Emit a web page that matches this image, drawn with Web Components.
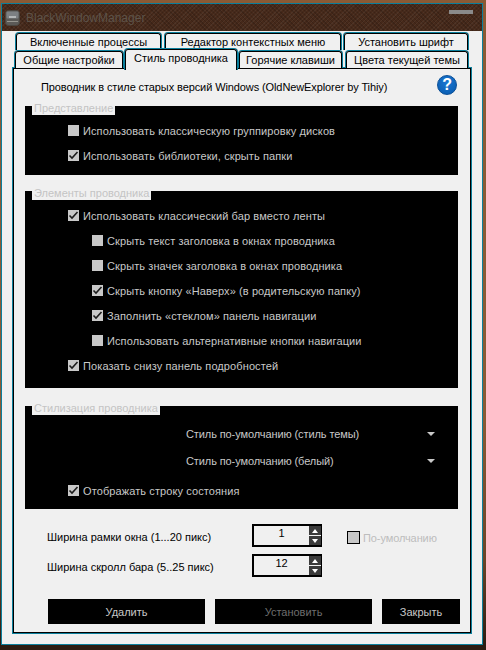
<!DOCTYPE html>
<html>
<head>
<meta charset="utf-8">
<title>BlackWindowManager</title>
<style>
html, body { margin: 0; padding: 0; height: 650px; overflow: hidden; }
body {
    background: linear-gradient(#8a5a34 0, #8a5a34 420px, #6b4428 560px, #2c1c12 645px);
    font: 11px "Liberation Sans", Arial, sans-serif;
}
</style>
</head>
<body>
<bwm-window caption="BlackWindowManager">
    <bwm-tabs>
        <div slot="top">
            <bwm-tab style="width:147px">Включенные процессы</bwm-tab>
            <bwm-tab style="width:178px;margin-left:2px">Редактор контекстных меню</bwm-tab>
            <bwm-tab style="width:126px;margin-left:1px">Установить шрифт</bwm-tab>
        </div>
        <div slot="bottom">
            <bwm-tab style="width:110px">Общие настройки</bwm-tab>
            <bwm-tab active style="width:114px">Стиль проводника</bwm-tab>
            <bwm-tab style="width:105px">Горячие клавиши</bwm-tab>
            <bwm-tab style="width:124px;margin-left:2px">Цвета текущей темы</bwm-tab>
        </div>
    </bwm-tabs>
    <bwm-panel>
        <bwm-header>Проводник в стиле старых версий Windows (OldNewExplorer by Tihiy)</bwm-header>

        <bwm-group caption="Представление" style="--pad-top:12px;--pad-bottom:7px">
            <bwm-check>Использовать классическую группировку дисков</bwm-check>
            <bwm-check checked>Использовать библиотеки, скрыть папки</bwm-check>
        </bwm-group>

        <bwm-group caption="Элементы проводника" style="--pad-top:12px;--pad-bottom:10px;margin-top:16px">
            <bwm-check checked>Использовать классический бар вместо ленты</bwm-check>
            <bwm-check indent>Скрыть текст заголовка в окнах проводника</bwm-check>
            <bwm-check indent>Скрыть значек заголовка в окнах проводника</bwm-check>
            <bwm-check indent checked>Скрыть кнопку «Наверх» (в родительскую папку)</bwm-check>
            <bwm-check indent checked>Заполнить «стеклом» панель навигации</bwm-check>
            <bwm-check indent>Использовать альтернативные кнопки навигации</bwm-check>
            <bwm-check checked>Показать снизу панель подробностей</bwm-check>
        </bwm-group>

        <bwm-group caption="Стилизация проводника" style="--pad-top:14px;--pad-bottom:6px;margin-top:18px">
            <bwm-combo>Стиль по-умолчанию (стиль темы)</bwm-combo>
            <bwm-combo>Стиль по-умолчанию (белый)</bwm-combo>
            <bwm-check checked style="margin-top:4px">Отображать строку состояния</bwm-check>
        </bwm-group>

        <bwm-settings>
            <span>Ширина рамки окна (1...20 пикс)</span>
            <bwm-spin value="1"></bwm-spin>
            <bwm-default>По-умолчанию</bwm-default>
            <span>Ширина скролл бара (5..25 пикс)</span>
            <bwm-spin value="12"></bwm-spin>
        </bwm-settings>

        <bwm-actions>
            <bwm-button style="width:157px">Удалить</bwm-button>
            <bwm-button disabled style="width:157px">Установить</bwm-button>
            <bwm-button style="width:78px">Закрыть</bwm-button>
        </bwm-actions>
    </bwm-panel>
</bwm-window>

<script>
class BwmElement extends HTMLElement {
    constructor() {
        super();
        this.shadowDOM = this.attachShadow({ mode: "open" });
    }
    connectedCallback() {
        this.render();
    }
}

class BwmWindow extends BwmElement {
    render() {
        this.shadowDOM.innerHTML = `<style>
:host {
    display: flex;
    flex-direction: column;
    box-sizing: border-box;
    width: 482px;
    height: 642px;
    margin: 3px 3px 5px 1px;
    border: 1px solid #0b7f9c;
}
.title {
    display: flex;
    align-items: center;
    gap: 6px;
    height: 27px;
    padding: 0 9px 0 3px;
    background-color: #46291a;
    background-image:
        repeating-linear-gradient(45deg, rgba(0,0,0,.16) 0 1px, transparent 1px 3px),
        repeating-linear-gradient(-45deg, rgba(255,255,255,.05) 0 1px, transparent 1px 3px);
    color: #5d5349;
    font-size: 12px;
}
.title svg { flex: none; }
.title span { flex: 1; }
.min { width: 24px; height: 4px; margin-top: -11px; background: #8a8a8a; }
.client {
    flex: 1;
    display: flex;
    flex-direction: column;
    padding: 1px 11px 11px 11px;
    background: #f0f0f0;
}
</style>
<div class="title">
    <svg width="15" height="16" viewBox="0 0 15 16">
        <rect x="0.5" y="0.5" width="14" height="15" rx="3" fill="#5b5a57" stroke="#4a453f"/>
        <rect x="1.5" y="1.5" width="12" height="7" rx="1" fill="#7c8083"/>
        <rect x="4" y="6" width="7" height="2" fill="#b4b7b8"/>
        <rect x="2" y="11" width="11" height="1" fill="#96968f"/>
    </svg>
    <span>${this.getAttribute("caption")}</span>
    <div class="min"></div>
</div>
<div class="client"><slot></slot></div>`;
    }
}

class BwmTabs extends BwmElement {
    render() {
        this.shadowDOM.innerHTML = `<style>
:host { display: block; position: relative; z-index: 2; height: 36px; }
::slotted(div) { display: flex; height: 18px; }
::slotted([slot="top"]) { margin-left: 2px; }
::slotted([slot="bottom"]) { margin-left: 1px; }
</style>
<slot name="top"></slot><slot name="bottom"></slot>`;
    }
}

class BwmTab extends BwmElement {
    render() {
        this.shadowDOM.innerHTML = `<style>
:host {
    display: block;
    box-sizing: border-box;
    flex: none;
    height: 18px;
    border: 1px solid #0b7f9c;
    border-bottom: 0;
    border-radius: 4px 4px 0 0;
    background: #f0f0f0;
    color: #000;
}
:host([active]) {
    position: relative;
    height: 22px;
    margin-top: -2px;
}
.in {
    display: flex;
    align-items: center;
    justify-content: center;
    box-sizing: border-box;
    height: 100%;
    border: 1px solid #000;
    border-bottom: 0;
    border-radius: 3px 3px 0 0;
    white-space: nowrap;
}
:host([active]) .in { padding-bottom: 5px; }
</style>
<div class="in"><slot></slot></div>`;
    }
}

class BwmPanel extends BwmElement {
    render() {
        this.shadowDOM.innerHTML = `<style>
:host {
    display: block;
    box-sizing: border-box;
    height: 565px;
    padding: 0 12px 0 11px;
    border: 1px solid #000;
    box-shadow: 0 0 0 1px #0b7f9c;
    color: #000;
}
</style>
<slot></slot>`;
    }
}

class BwmHeader extends BwmElement {
    render() {
        this.shadowDOM.innerHTML = `<style>
:host {
    display: flex;
    align-items: center;
    justify-content: space-between;
    box-sizing: border-box;
    height: 37px;
    padding: 0 1px 2px 16px;
    letter-spacing: -.1px;
}
.help {
    box-sizing: border-box;
    width: 20px;
    height: 20px;
    margin-top: -3px;
    border: 1px solid #0a4f97;
    border-radius: 50%;
    background: radial-gradient(circle at 50% 35%, #1b78d2, #0759ad);
    color: #fff;
    font: bold 16px/18px "Liberation Sans", Arial, sans-serif;
    text-align: center;
}
</style>
<span><slot></slot></span><div class="help">?</div>`;
    }
}

class BwmGroup extends BwmElement {
    render() {
        this.shadowDOM.innerHTML = `<style>
:host {
    display: block;
    position: relative;
    padding: var(--pad-top) 0 var(--pad-bottom);
    background: #000;
    color: #c8c8c8;
}
.caption {
    position: absolute;
    left: 7px;
    top: -4px;
    height: 13px;
    padding: 0 2px;
    background: #f0f0f0;
    color: #c4c4c4;
    line-height: 13px;
}
</style>
<div class="caption">${this.getAttribute("caption")}</div>
<slot></slot>`;
    }
}

class BwmCheck extends BwmElement {
    render() {
        const mark = this.hasAttribute("checked")
            ? `<svg width="11" height="11" viewBox="0 0 11 11"><path d="M1.5 5.5 L4 8 L9.5 2" fill="none" stroke="#1c1c1c" stroke-width="1.6"/></svg>`
            : "";
        this.shadowDOM.innerHTML = `<style>
:host {
    display: flex;
    align-items: center;
    gap: 4px;
    height: 25px;
    padding-left: 43px;
    letter-spacing: .1px;
}
:host([indent]) { padding-left: 67px; }
.box { flex: none; width: 11px; height: 11px; background: #c8c8c8; }
svg { display: block; }
</style>
<div class="box">${mark}</div><span><slot></slot></span>`;
    }
}

class BwmCombo extends BwmElement {
    render() {
        this.shadowDOM.innerHTML = `<style>
:host {
    display: flex;
    align-items: center;
    justify-content: space-between;
    height: 27px;
    padding: 0 23px 0 161px;
    letter-spacing: -.1px;
}
.arrow {
    width: 0;
    height: 0;
    border: 4px solid transparent;
    border-top: 4px solid #c8c8c8;
    border-bottom: 0;
}
</style>
<span><slot></slot></span><div class="arrow"></div>`;
    }
}

class BwmSettings extends BwmElement {
    render() {
        this.shadowDOM.innerHTML = `<style>
:host {
    display: grid;
    grid-template-columns: 205px 70px auto;
    grid-auto-rows: 23px;
    row-gap: 7px;
    align-items: center;
    margin-top: 15px;
    padding-left: 22px;
    color: #000;
}
::slotted(span) { margin-top: 2px; }
</style>
<slot></slot>`;
    }
}

class BwmSpin extends BwmElement {
    render() {
        this.shadowDOM.innerHTML = `<style>
:host {
    display: flex;
    box-sizing: border-box;
    height: 23px;
    border: 2px solid #000;
    border-right-width: 1px;
    background: #f0f0f0;
}
.value { flex: 1; text-align: center; line-height: 15px; }
.btns {
    display: flex;
    flex-direction: column;
    width: 12px;
    background: #3a3a3a;
}
.btns div { flex: 1; display: flex; align-items: center; justify-content: center; }
.btns div + div { border-top: 1px solid #f0f0f0; }
.up { width: 0; height: 0; border: 3.5px solid transparent; border-bottom: 4px solid #fff; border-top: 0; }
.down { width: 0; height: 0; border: 3.5px solid transparent; border-top: 4px solid #fff; border-bottom: 0; }
</style>
<div class="value">${this.getAttribute("value")}</div>
<div class="btns"><div><i class="up"></i></div><div><i class="down"></i></div></div>`;
    }
}

class BwmDefault extends BwmElement {
    render() {
        this.shadowDOM.innerHTML = `<style>
:host {
    display: flex;
    align-items: center;
    gap: 3px;
    margin: 4px 0 0 25px;
    color: #bdbdbd;
    letter-spacing: -.1px;
}
.box { box-sizing: border-box; width: 13px; height: 13px; border: 1px solid #000; background: #c8c8c8; }
</style>
<div class="box"></div><span><slot></slot></span>`;
    }
}

class BwmActions extends BwmElement {
    render() {
        this.shadowDOM.innerHTML = `<style>
:host { display: flex; gap: 10px; margin: 22px 0 0 23px; }
::slotted(*) { flex: none; }
</style>
<slot></slot>`;
    }
}

class BwmButton extends BwmElement {
    render() {
        this.shadowDOM.innerHTML = `<style>
:host {
    display: flex;
    align-items: center;
    justify-content: center;
    height: 25px;
    background: #000;
    color: #c8c8c8;
}
:host([disabled]) { color: #6e6e6e; }
</style>
<slot></slot>`;
    }
}

customElements.define("bwm-window", BwmWindow);
customElements.define("bwm-tabs", BwmTabs);
customElements.define("bwm-tab", BwmTab);
customElements.define("bwm-panel", BwmPanel);
customElements.define("bwm-header", BwmHeader);
customElements.define("bwm-group", BwmGroup);
customElements.define("bwm-check", BwmCheck);
customElements.define("bwm-combo", BwmCombo);
customElements.define("bwm-settings", BwmSettings);
customElements.define("bwm-spin", BwmSpin);
customElements.define("bwm-default", BwmDefault);
customElements.define("bwm-actions", BwmActions);
customElements.define("bwm-button", BwmButton);
</script>
</body>
</html>
